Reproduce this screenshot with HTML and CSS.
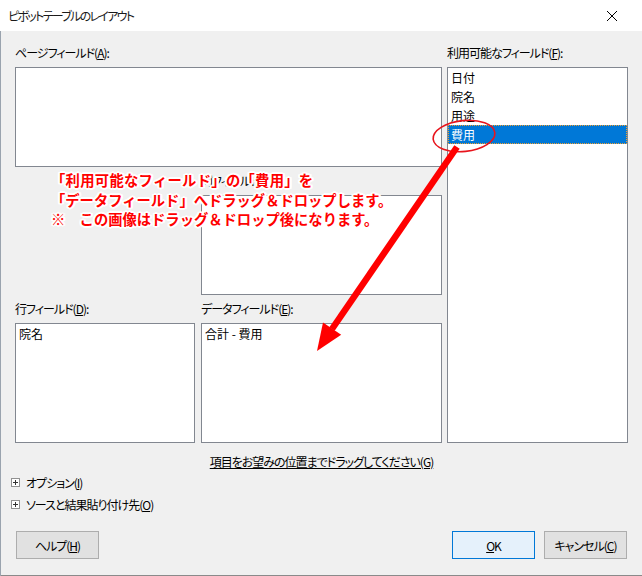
FILE: index.html
```html
<!DOCTYPE html>
<html lang="ja">
<head>
<meta charset="utf-8">
<title>ピボットテーブルのレイアウト</title>
<link rel="stylesheet" href="styles.css">
</head>
<body>
<div class="window">
  <div class="titlebar">
    <span class="title">ピボットテーブルのレイアウト</span>
    <svg class="close" width="12" height="12" viewBox="0 0 12 12"><path d="M1 1L11 11M11 1L1 11" stroke="#000" stroke-width="1" fill="none"/></svg>
  </div>
  <div class="content">
    <div class="main">
      <div class="left">
        <div class="label">ページフィールド(<u>A</u>):</div>
        <div class="box page-box"></div>
        <div class="lower">
          <div></div>
          <div class="field">
            <div class="label">列フィールド(<u>C</u>):</div>
            <div class="box col-box"></div>
          </div>
          <div class="field">
            <div class="label">行フィールド(<u>D</u>):</div>
            <div class="box row-box"><div class="item">院名</div></div>
          </div>
          <div class="field">
            <div class="label">データフィールド(<u>E</u>):</div>
            <div class="box data-box"><div class="item">合計 - 費用</div></div>
          </div>
        </div>
      </div>
      <div class="right">
        <div class="label">利用可能なフィールド(<u>F</u>):</div>
        <div class="box list-box">
          <div class="item">日付</div>
          <div class="item">院名</div>
          <div class="item">用途</div>
          <div class="item sel">費用</div>
        </div>
      </div>
    </div>
    <div class="hint"><span class="link">項目をお望みの位置までドラッグしてください(G)</span></div>
    <div class="expander"><svg class="plus" width="9" height="9" viewBox="0 0 9 9"><rect x="0.5" y="0.5" width="8" height="8" fill="#fff" stroke="#919191"/><path d="M2 4.5H7M4.5 2V7" stroke="#333" stroke-width="1"/></svg><span>オプション(<u>I</u>)</span></div>
    <div class="expander"><svg class="plus" width="9" height="9" viewBox="0 0 9 9"><rect x="0.5" y="0.5" width="8" height="8" fill="#fff" stroke="#919191"/><path d="M2 4.5H7M4.5 2V7" stroke="#333" stroke-width="1"/></svg><span>ソースと結果貼り付け先(<u>O</u>)</span></div>
    <div class="buttons">
      <button class="btn">ヘルプ(<u>H</u>)</button>
      <div class="btn-group">
        <button class="btn ok"><u>O</u>K</button>
        <button class="btn">キャンセル(<u>C</u>)</button>
      </div>
    </div>
  </div>
  <div class="annotation">
    <div class="line l1">「利用可能なフィールド」の「費用」を</div>
    <div class="line l2">「データフィールド」へドラッグ＆ドロップします。</div>
    <div class="line l3">※　この画像はドラッグ＆ドロップ後になります。</div>
  </div>
  <svg class="overlay" width="642" height="576" viewBox="0 0 642 576">
    <ellipse cx="464" cy="136" rx="31" ry="15.5" transform="rotate(-6 464 136)" fill="none" stroke="#e8141c" stroke-width="1.6"/>
    <line x1="457" y1="147" x2="332" y2="329" stroke="#ff0000" stroke-width="6.5"/>
    <polygon points="317,351 323,322.4 341.2,334.8" fill="#ff0000"/>
  </svg>
</div>
</body>
</html>
```
FILE: styles.css
```css
html, body {
  margin: 0;
  padding: 0;
}
body {
  font-family: "Noto Sans CJK JP", "Noto Sans", sans-serif;
  font-size: 12px;
  color: #000;
  font-feature-settings: "palt";
  letter-spacing: -1px;
}
.window {
  position: relative;
  width: 642px;
  height: 576px;
  background: #f0f0f0;
  overflow: hidden;
}
.titlebar {
  height: 31px;
  background: #fff;
  display: flex;
  align-items: center;
  justify-content: space-between;
  padding: 0 24px 0 8px;
  box-sizing: border-box;
}
.title {
  font-size: 12px;
  letter-spacing: -1.7px;
  color: #1a1a1a;
}
.content {
  height: 545px;
  box-sizing: border-box;
  padding: 14px 14px 0 15px;
  box-shadow: inset 1px 0 #9aa3ae, inset 0 -1px #8a8a8a;
}
.main {
  display: grid;
  grid-template-columns: 427px 181px;
  column-gap: 5px;
}
.label {
  height: 16px;
  line-height: 16px;
  margin-bottom: 6px;
  white-space: nowrap;
}
.box {
  background: #fff;
  border: 1px solid #828790;
  box-sizing: border-box;
}
.page-box { height: 100px; }
.lower {
  display: grid;
  grid-template-columns: 180px 241px;
  column-gap: 6px;
  row-gap: 6px;
  margin-top: 6px;
}
.col-box { height: 100px; }
.row-box, .data-box { height: 120px; }
.list-box { height: 376px; }
.item {
  height: 19px;
  line-height: 19px;
  padding-left: 3px;
  letter-spacing: 0;
}
.list-box .item.sel {
  background: #0078d7;
  color: #fff;
  outline: 1px dotted #f0a030;
  outline-offset: -1px;
}
.hint {
  margin-top: 11px;
  height: 16px;
  line-height: 16px;
  text-align: center;
}
.link { text-decoration: underline; }
.expander {
  display: flex;
  align-items: center;
  height: 22px;
  margin-left: -4px;
  gap: 6px;
}
.hint + .expander { margin-top: 1px; }
.plus { display: block; }
.buttons {
  display: flex;
  justify-content: space-between;
  margin-top: 16px;
  padding: 0 1px;
}
.btn-group {
  display: flex;
  gap: 9px;
}
.btn {
  width: 83px;
  height: 28px;
  border: 1px solid #adadad;
  background: #e1e1e1;
  font-family: inherit;
  font-size: 12px;
  letter-spacing: -1px;
  font-feature-settings: "palt";
  color: #000;
  padding: 0;
  margin: 0;
}
.btn.ok {
  border-color: #0078d7;
  background: #e5f1fb;
}
.annotation {
  position: absolute;
  left: 51px;
  top: 170px;
  font-size: 14.3px;
  line-height: 19.5px;
  font-weight: 700;
  letter-spacing: 0;
  font-feature-settings: normal;
  color: #ff0000;
  white-space: nowrap;
  text-shadow: 2px 0 #fff, -2px 0 #fff, 0 2px #fff, 0 -2px #fff, 1px 1px #fff, -1px -1px #fff, 1px -1px #fff, -1px 1px #fff, 2px 1px #fff, -2px 1px #fff, 2px -1px #fff, -2px -1px #fff;
}
.annotation .l1 { letter-spacing: 0.3px; }
.overlay {
  position: absolute;
  left: 0;
  top: 0;
  pointer-events: none;
}
```
